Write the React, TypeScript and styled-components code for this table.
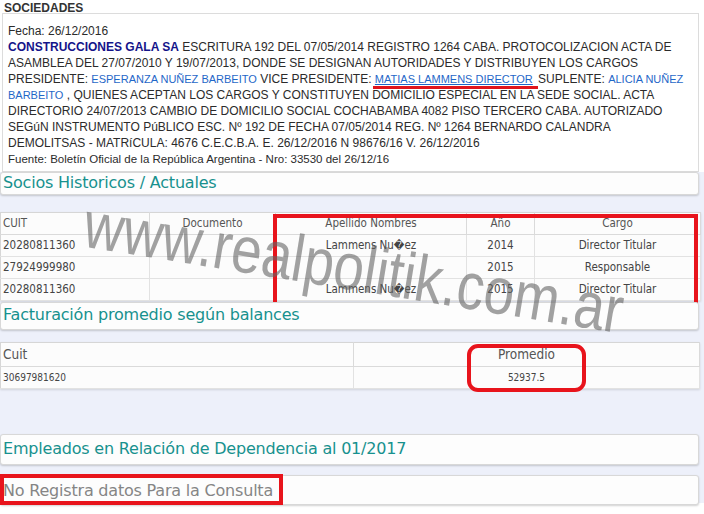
import styled, { createGlobalStyle } from 'styled-components';

const GlobalStyle = createGlobalStyle`
  html, body {
    margin: 0;
    padding: 0;
    background: #fff;
  }
`;

const Page = styled.div`
  position: relative;
  width: 704px;
  height: 514px;
  overflow: hidden;
  background: #fff;
`;

const SectionTitle = styled.div`
  height: 13px;
  padding-left: 4px;
  font: bold 12px/16px 'Liberation Sans', Arial, sans-serif;
  color: #333;
`;

const NoticeBox = styled.div`
  width: 697px;
  box-sizing: border-box;
  height: 159px;
  margin-left: 2px;
  padding: 9px 6px 0 5px;
  border: 1px solid #dcdcdc;
  background: #fff;
  font: 12px/16px 'Liberation Sans', Arial, sans-serif;
  color: #2b2b2b;
  white-space: nowrap;
`;

const Company = styled.b`
  color: #14148a;
`;

const Person = styled.a`
  color: #1f67c8;
  font-size: 11px;
  text-decoration: none;
`;

const Marked = styled.span`
  padding: 0 5px 1px 2px;
  margin-left: -2px;
  margin-right: -3px;
  font-size: 11px;
  border-bottom: 3px solid #e0141c;
  a {
    text-decoration: underline;
  }
`;

const Source = styled.div`
  font-size: 11.5px;
`;

const Lower = styled.div`
  height: 331px;
  background: #edf0fa;
  font-family: 'DejaVu Sans Condensed', 'DejaVu Sans', sans-serif;
`;

const Panel = styled.div<{ $h: number; $mt?: number; $mb?: number; $muted?: boolean; $lift?: number }>`
  position: relative;
  width: 699px;
  height: ${p => p.$h}px;
  box-sizing: border-box;
  margin-top: ${p => p.$mt ?? 0}px;
  margin-bottom: ${p => p.$mb ?? 0}px;
  padding: 0 2px ${p => p.$lift ?? 3}px;
  display: flex;
  align-items: center;
  background: #fdfdfd;
  border: 1px solid #d8d8d8;
  border-radius: 3px;
  box-shadow: 0 1px 2px rgba(0, 0, 0, 0.18);
  font-family: 'DejaVu Sans', sans-serif;
  font-size: 16px;
  letter-spacing: -0.2px;
  color: ${p => (p.$muted ? '#858585' : '#17918e')};
`;

const TableWrap = styled.div<{ $mb?: number }>`
  position: relative;
  width: 700px;
  margin-bottom: ${p => p.$mb ?? 0}px;
`;

const Grid = styled.table`
  width: 100%;
  table-layout: fixed;
  border-collapse: collapse;
  background: #fcfcfc;
  border: 1px solid #d6d6d6;
  box-shadow: 0 1px 2px rgba(0, 0, 0, 0.12);
`;

const Row = styled.tr<{ $h?: number }>`
  height: ${p => p.$h ?? 22}px;
`;

const Th = styled.th<{ $left?: boolean; $size?: number }>`
  padding: 0 2px 2px;
  border-right: 1px solid #dadada;
  border-bottom: 1px solid #dadada;
  font-weight: normal;
  font-size: ${p => p.$size ?? 11.5}px;
  color: #555;
  text-align: ${p => (p.$left ? 'left' : 'center')};
`;

const Td = styled.td<{ $left?: boolean; $size?: number }>`
  padding: 0 2px 1px;
  border-right: 1px solid #e2e2e2;
  border-bottom: 1px solid #e2e2e2;
  font-size: ${p => p.$size ?? 11.5}px;
  color: #444;
  text-align: ${p => (p.$left ? 'left' : 'center')};
  white-space: nowrap;
`;

const RedBox = styled.div<{ $x: number; $y: number; $w: number; $h: number; $round?: boolean }>`
  position: absolute;
  left: ${p => p.$x}px;
  top: ${p => p.$y}px;
  width: ${p => p.$w}px;
  height: ${p => p.$h}px;
  box-sizing: border-box;
  border: 4px solid #e8141c;
  border-radius: ${p => (p.$round ? '11px' : '0')};
  pointer-events: none;
`;

const Watermark = styled.div`
  position: absolute;
  left: 24px;
  top: 234px;
  width: 660px;
  text-align: center;
  font: 66px/1 'Liberation Sans', Arial, sans-serif;
  color: rgba(100, 100, 100, 0.6);
  transform: rotate(9.2deg) scaleX(0.83);
  transform-origin: center;
  pointer-events: none;
  white-space: nowrap;
`;

const partners = [
  { cuit: '20280811360', name: 'Lammens Nu\uFFFDez', year: '2014', role: 'Director Titular' },
  { cuit: '27924999980', name: '', year: '2015', role: 'Responsable' },
  { cuit: '20280811360', name: 'Lammens Nu\uFFFDez', year: '2015', role: 'Director Titular' },
];

export default function App() {
  return (
    <Page>
      <GlobalStyle />
      <SectionTitle>SOCIEDADES</SectionTitle>
      <NoticeBox>
        Fecha: 26/12/2016
        <br />
        <Company>CONSTRUCCIONES GALA SA</Company> ESCRITURA 192 DEL 07/05/2014 REGISTRO 1264 CABA. PROTOCOLIZACION ACTA DE
        <br />
        ASAMBLEA DEL 27/07/2010 Y 19/07/2013, DONDE SE DESIGNAN AUTORIDADES Y DISTRIBUYEN LOS CARGOS
        <br />
        PRESIDENTE: <Person>ESPERANZA NUÑEZ BARBEITO</Person> VICE PRESIDENTE:{' '}
        <Marked>
          <Person>MATIAS LAMMENS DIRECTOR</Person>
        </Marked>{' '}
        SUPLENTE: <Person>ALICIA NUÑEZ</Person>
        <br />
        <Person>BARBEITO</Person> , QUIENES ACEPTAN LOS CARGOS Y CONSTITUYEN DOMICILIO ESPECIAL EN LA SEDE SOCIAL. ACTA
        <br />
        DIRECTORIO 24/07/2013 CAMBIO DE DOMICILIO SOCIAL COCHABAMBA 4082 PISO TERCERO CABA. AUTORIZADO
        <br />
        SEGúN INSTRUMENTO PúBLICO ESC. Nº 192 DE FECHA 07/05/2014 REG. Nº 1264 BERNARDO CALANDRA
        <br />
        DEMOLITSAS - MATRíCULA: 4676 C.E.C.B.A. E. 26/12/2016 N 98676/16 V. 26/12/2016
        <Source>Fuente: Boletín Oficial de la República Argentina - Nro: 33530 del 26/12/16</Source>
      </NoticeBox>

      <Lower>
        <Panel $h={23} $mb={17} $lift={3}>Socios Historicos / Actuales</Panel>

        <TableWrap>
          <Grid>
            <colgroup>
              <col style={{ width: 149 }} />
              <col style={{ width: 126 }} />
              <col style={{ width: 191 }} />
              <col style={{ width: 68 }} />
              <col style={{ width: 166 }} />
            </colgroup>
            <thead>
              <Row>
                <Th $left>CUIT</Th>
                <Th>Documento</Th>
                <Th>Apellido Nombres</Th>
                <Th>Año</Th>
                <Th>Cargo</Th>
              </Row>
            </thead>
            <tbody>
              {partners.map((p, i) => (
                <Row key={i}>
                  <Td $left>{p.cuit}</Td>
                  <Td />
                  <Td>{p.name}</Td>
                  <Td>{p.year}</Td>
                  <Td>{p.role}</Td>
                </Row>
              ))}
            </tbody>
          </Grid>
          <RedBox $x={273} $y={2} $w={425} $h={92} />
        </TableWrap>

        <Panel $h={28} $mt={1} $mb={12} $lift={3}>Facturación promedio según balances</Panel>

        <TableWrap $mb={45}>
          <Grid>
            <colgroup>
              <col style={{ width: 353 }} />
              <col style={{ width: 346 }} />
            </colgroup>
            <thead>
              <Row $h={24}>
                <Th $left $size={13.5}>Cuit</Th>
                <Th $size={13.5}>Promedio</Th>
              </Row>
            </thead>
            <tbody>
              <Row>
                <Td $left $size={10}>30697981620</Td>
                <Td $size={10}>52937.5</Td>
              </Row>
            </tbody>
          </Grid>
          <RedBox $x={467} $y={2} $w={119} $h={48} $round />
        </TableWrap>

        <Panel $h={31} $mb={10} $lift={3}>Empleados en Relación de Dependencia al 01/2017</Panel>

        <Panel $h={30} $muted $lift={0}>
          No Registra datos Para la Consulta
          <RedBox $x={-1} $y={-2} $w={283} $h={31} />
        </Panel>
      </Lower>

      <Watermark>www.realpolitik.com.ar</Watermark>
    </Page>
  );
}
